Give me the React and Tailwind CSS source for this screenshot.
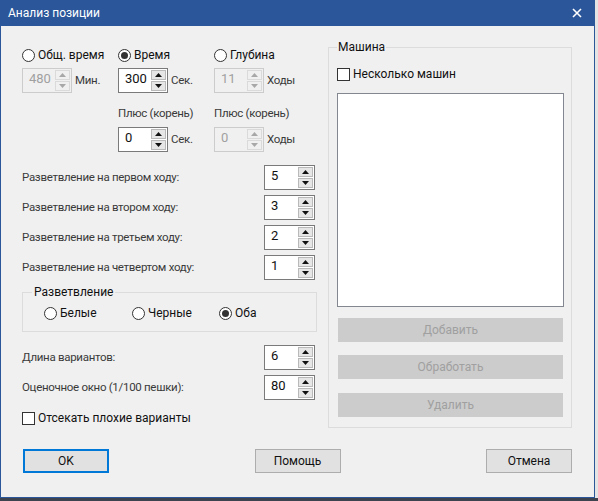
import React from "react";

const FONT = "font-['Roboto','Noto_Sans',sans-serif]";
const SMALL = "text-[11.5px] tracking-[-0.3px] text-[#3a3a3a]";

function Arrow({ up, disabled }) {
  return (
    <div
      className={`flex flex-1 items-center justify-center border ${
        disabled ? "border-[#dadada] bg-[#f0f0f0]" : "border-[#b9b9b9] bg-[#e6e6e6]"
      }`}
    >
      <svg width="7" height="4" viewBox="0 0 7 4">
        <path
          d={up ? "M0 4 L3.5 0 L7 4 Z" : "M0 0 L3.5 4 L7 0 Z"}
          fill={disabled ? "#a8a8a8" : "#111"}
        />
      </svg>
    </div>
  );
}

function Spin({ value, disabled, wide }) {
  return (
    <div
      className={`flex h-[25px] ${wide ? "w-[51px]" : "w-[50px]"} border ${
        disabled ? "border-[#cccccc] bg-[#f0f0f0] text-[#a0a0a0]" : "border-[#7a7a7a] bg-white text-[#111]"
      }`}
    >
      <div className="flex-1 pl-[6px] pt-[2px] text-[13px] leading-[16px]">{value}</div>
      <div className="flex w-[17px] flex-col gap-px p-px">
        <Arrow up disabled={disabled} />
        <Arrow disabled={disabled} />
      </div>
    </div>
  );
}

function Radio({ label, checked }) {
  return (
    <div className="flex h-[16px] items-center gap-[3px]">
      <span className="flex h-[13px] w-[13px] items-center justify-center rounded-full border border-[#333] bg-white">
        {checked && <span className="h-[7px] w-[7px] rounded-full bg-[#333]" />}
      </span>
      <span className="text-[12px] leading-[16px] text-[#111]">{label}</span>
    </div>
  );
}

function Check({ label }) {
  return (
    <div className="flex h-[16px] items-center gap-[3px]">
      <span className="h-[13px] w-[13px] border border-[#333] bg-white" />
      <span className="text-[12px] leading-[16px] text-[#111]">{label}</span>
    </div>
  );
}

function SpinWithUnit({ value, unit, disabled }) {
  return (
    <div className="flex h-[25px] items-center gap-[3px]">
      <Spin value={value} disabled={disabled} />
      <span className={SMALL}>{unit}</span>
    </div>
  );
}

function Row({ label, value }) {
  return (
    <div className="flex h-[25px] items-center justify-between pr-px">
      <span className={SMALL}>{label}</span>
      <Spin value={value} wide />
    </div>
  );
}

function Btn({ children, focused }) {
  return (
    <div
      className={`flex h-[24px] w-[86px] items-center justify-center text-[12px] text-[#111] bg-[#e1e1e1] ${
        focused ? "border-2 border-[#0078d7]" : "border border-[#adadad]"
      }`}
    >
      {children}
    </div>
  );
}

function GrayBtn({ children }) {
  return (
    <div className="mx-px flex h-[24px] items-center justify-center bg-[#cccccc] text-[12px] text-[#a0a0a0]">
      {children}
    </div>
  );
}

export default function App() {
  return (
    <div className={`flex h-[501px] w-[598px] flex-col bg-[#e4e4e4] ${FONT}`}>
      <div className="flex h-[498px] w-[595px] flex-col border-x border-b border-[#2b579a] bg-[#f0f0f0]">
        {/* Title bar */}
        <div className="flex h-[26px] shrink-0 items-center justify-between bg-[#2b579a] pl-[7px] pr-[12px] text-white">
          <span className="text-[12px]">Анализ позиции</span>
          <svg width="10" height="10" viewBox="0 0 10 10">
            <path d="M1 1 L9 9 M9 1 L1 9" stroke="#fff" strokeWidth="1.6" />
          </svg>
        </div>

        {/* Body */}
        <div className="flex flex-col pl-[21px] pt-[13px]">
          <div className="flex items-start gap-[10px]">
            {/* Left column */}
            <div className="mt-[8px] flex w-[296px] flex-col">
              <div className="grid grid-cols-[96px_96px_96px]">
                <Radio label="Общ. время" />
                <Radio label="Время" checked />
                <Radio label="Глубина" />
              </div>
              <div className="mt-[5px] grid grid-cols-[96px_96px_96px]">
                <SpinWithUnit value="480" unit="Мин." disabled />
                <SpinWithUnit value="300" unit="Сек." />
                <SpinWithUnit value="11" unit="Ходы" disabled />
              </div>
              <div className={`mt-[11px] grid grid-cols-[96px_96px_96px] leading-[18px] ${SMALL}`}>
                <span />
                <span>Плюс (корень)</span>
                <span>Плюс (корень)</span>
              </div>
              <div className="mt-[5px] grid grid-cols-[96px_96px_96px]">
                <span />
                <SpinWithUnit value="0" unit="Сек." />
                <SpinWithUnit value="0" unit="Ходы" disabled />
              </div>

              <div className="mt-[13px] flex flex-col gap-[5px] pr-[2px]">
                <Row label="Разветвление на первом ходу:" value="5" />
                <Row label="Разветвление на втором ходу:" value="3" />
                <Row label="Разветвление на третьем ходу:" value="2" />
                <Row label="Разветвление на четвертом ходу:" value="1" />
              </div>

              <fieldset className="mt-[4px] mr-px border border-[#dcdcdc] pb-[10px] pl-[21px]">
                <legend className="ml-[-12px] px-[2px] text-[12px] leading-[16px] text-[#111]">Разветвление</legend>
                <div className="grid grid-cols-[88px_87px_80px] pt-[5px]">
                  <Radio label="Белые" />
                  <Radio label="Черные" />
                  <Radio label="Оба" checked />
                </div>
              </fieldset>

              <div className="mt-[13px] flex flex-col gap-[5px] pr-[2px]">
                <Row label="Длина вариантов:" value="6" />
                <Row label="Оценочное окно (1/100 пешки):" value="80" />
              </div>

              <div className="mt-[10px]">
                <Check label="Отсекать плохие варианты" />
              </div>
            </div>

            {/* Right group */}
            <fieldset className="flex w-[244px] flex-col border border-[#dcdcdc] pb-[10px] pl-[8px] pr-[7px]">
              <legend className="px-[1px] text-[12px] leading-[16px] text-[#111]">Машина</legend>
              <div className="pt-[11px]">
                <Check label="Несколько машин" />
              </div>
              <div className="mt-[11px] h-[214px] border border-[#828790] bg-white" />
              <div className="mt-[11px]">
                <GrayBtn>Добавить</GrayBtn>
              </div>
              <div className="mt-[13px]">
                <GrayBtn>Обработать</GrayBtn>
              </div>
              <div className="mt-[14px]">
                <GrayBtn>Удалить</GrayBtn>
              </div>
            </fieldset>
          </div>

          {/* Bottom buttons */}
          <div className="mt-[21px] flex w-[550px] justify-between pl-[1px]">
            <Btn focused>OK</Btn>
            <Btn>Помощь</Btn>
            <Btn>Отмена</Btn>
          </div>
        </div>
      </div>
      <div className="h-[3px] w-[598px] bg-[#3d4450]" />
    </div>
  );
}
